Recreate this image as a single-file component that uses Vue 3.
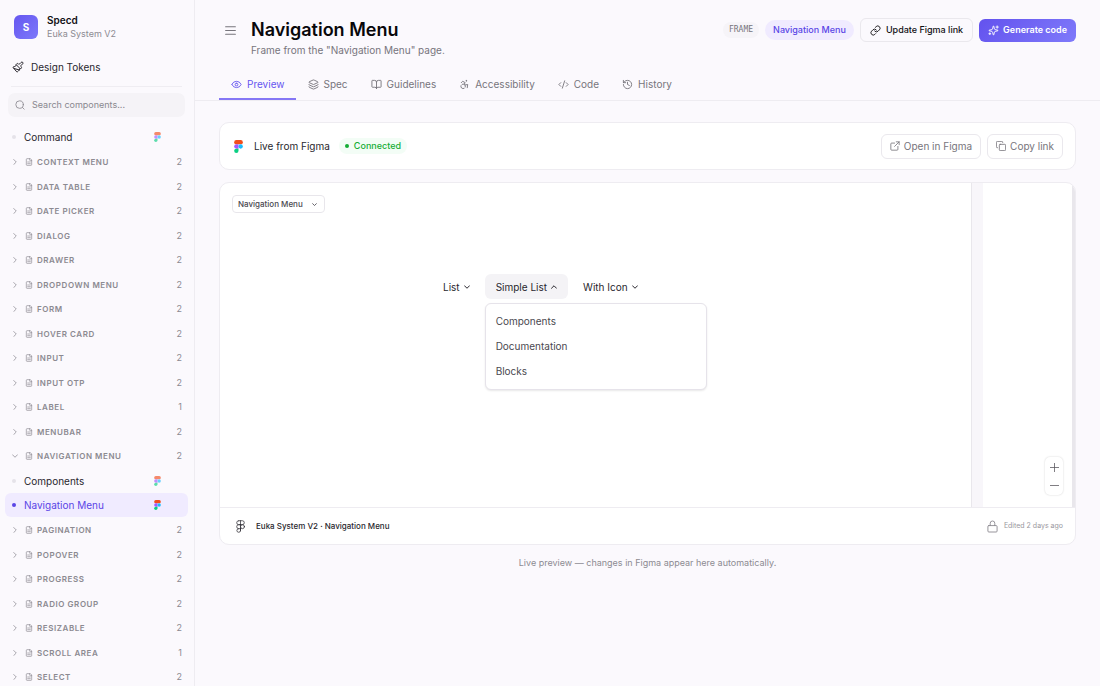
<script setup>
import { ref } from 'vue'

const query = ref('')
const frame = ref('Navigation Menu')
const activeTab = ref('Preview')

const before = [
  ['Context Menu', 2], ['Data Table', 2], ['Date Picker', 2], ['Dialog', 2],
  ['Drawer', 2], ['Dropdown Menu', 2], ['Form', 2], ['Hover Card', 2],
  ['Input', 2], ['Input OTP', 2], ['Label', 1], ['Menubar', 2],
  ['Navigation Menu', 2],
]
const after = [
  ['Pagination', 2], ['Popover', 2], ['Progress', 2], ['Radio Group', 2],
  ['Resizable', 2], ['Scroll Area', 1], ['Select', 2],
]
const toGroup = ([name, count]) => ({ name, count, open: name === 'Navigation Menu' })

const sections = [
  { items: [{ name: 'Command' }], groups: before.map(toGroup) },
  {
    items: [{ name: 'Components' }, { name: 'Navigation Menu', active: true }],
    groups: after.map(toGroup),
  },
]

const tabs = [
  { name: 'Preview', paths: ['M2.1 12.3a1 1 0 0 1 0-.7 10.8 10.8 0 0 1 19.8 0 1 1 0 0 1 0 .7 10.8 10.8 0 0 1-19.8 0', 'M12 9a3 3 0 1 0 0 6 3 3 0 0 0 0-6'] },
  { name: 'Spec', paths: ['M12.8 2.2a2 2 0 0 0-1.6 0L2.6 6.1a1 1 0 0 0 0 1.8l8.6 3.9a2 2 0 0 0 1.6 0l8.6-3.9a1 1 0 0 0 0-1.8z', 'M2 12a1 1 0 0 0 .6.9l8.6 3.9a2 2 0 0 0 1.6 0l8.6-3.9A1 1 0 0 0 22 12', 'M2 17a1 1 0 0 0 .6.9l8.6 3.9a2 2 0 0 0 1.6 0l8.6-3.9A1 1 0 0 0 22 17'] },
  { name: 'Guidelines', paths: ['M12 7v14', 'M3 18a1 1 0 0 1-1-1V4a1 1 0 0 1 1-1h5a4 4 0 0 1 4 4 4 4 0 0 1 4-4h5a1 1 0 0 1 1 1v13a1 1 0 0 1-1 1h-6a3 3 0 0 0-3 3 3 3 0 0 0-3-3z'] },
  { name: 'Accessibility', paths: ['M16 3a1 1 0 1 0 0 2 1 1 0 0 0 0-2', 'm18 19 1-7-6 1', 'm5 8 3-3 5.5 3-2.36 3.5', 'M4.24 14.5a5 5 0 0 0 6.88 6', 'M13.76 17.5a5 5 0 0 0-6.88-6'] },
  { name: 'Code', paths: ['m18 16 4-4-4-4', 'm6 8-4 4 4 4', 'm14.5 4-5 16'] },
  { name: 'History', paths: ['M3 12a9 9 0 1 0 9-9 9.75 9.75 0 0 0-6.74 2.74L3 8', 'M3 3v5h5', 'M12 7v5l4 2'] },
]
</script>

<template>
  <div class="app">
    <aside class="sidebar">
      <div class="brand">
        <span class="logo">S</span>
        <div>
          <div class="brand-name">Specd</div>
          <div class="brand-sub">Euka System V2</div>
        </div>
      </div>

      <a href="#tokens" class="tokens">
        <svg class="icon i12" viewBox="0 0 24 24">
          <path d="m14.622 17.897-10.68-2.913" />
          <path d="M18.376 2.622a1 1 0 1 1 3.002 3.002L17.36 9.643a.5.5 0 0 0 0 .707l.944.944a2.41 2.41 0 0 1 0 3.408l-.944.944a.5.5 0 0 1-.707 0L8.354 7.348a.5.5 0 0 1 0-.707l.944-.944a2.41 2.41 0 0 1 3.408 0l.944.944a.5.5 0 0 0 .707 0z" />
          <path d="M9 8c-1.804 2.71-3.97 3.46-6.583 3.948a.507.507 0 0 0-.302.819l7.32 8.883a1 1 0 0 0 1.185.204C12.735 20.405 16 16.792 16 15" />
        </svg>
        Design Tokens
      </a>

      <label class="search">
        <svg class="icon i10" viewBox="0 0 24 24"><circle cx="11" cy="11" r="9" /><path d="m22 22-4.3-4.3" /></svg>
        <input v-model="query" type="text" placeholder="Search components..." aria-label="Search components">
      </label>

      <nav class="tree">
        <template v-for="(section, i) in sections" :key="i">
          <div class="items">
            <a v-for="item in section.items" :key="item.name" href="#component" class="item" :class="{ active: item.active }">
              <span class="dot"></span>
              <span class="item-name">{{ item.name }}</span>
              <svg class="figma" viewBox="0 0 24 36">
                <path fill="#f24e1e" d="M6 0h12a6 6 0 0 1 0 12H6A6 6 0 0 1 6 0" />
                <path fill="#a259ff" d="M6 12h6v12H6a6 6 0 0 1 0-12" />
                <circle cx="18" cy="18" r="6" fill="#1abcfe" />
                <path fill="#0acf83" d="M6 24h6v6a6 6 0 1 1-6-6" />
              </svg>
            </a>
          </div>
          <div class="groups">
            <button v-for="group in section.groups" :key="group.name" type="button" class="group" :aria-expanded="group.open">
              <svg class="icon i6" viewBox="0 0 24 24"><path :d="group.open ? 'm2 7 10 10L22 7' : 'm7 2 10 10L7 22'" /></svg>
              <svg class="icon doc" viewBox="0 0 24 24">
                <path d="M15 2H6a2 2 0 0 0-2 2v16a2 2 0 0 0 2 2h12a2 2 0 0 0 2-2V7z" />
                <path d="M14 2v4a2 2 0 0 0 2 2h4M8 12h8M8 17h8" />
              </svg>
              <span class="group-name">{{ group.name }}</span>
              <span class="count">{{ group.count }}</span>
            </button>
          </div>
        </template>
      </nav>
    </aside>

    <main class="main">
      <header class="header">
        <div class="title-row">
          <button type="button" class="menu-toggle" aria-label="Toggle sidebar">
            <svg class="icon i13" viewBox="0 0 24 24"><path d="M3 5h18M3 12h18M3 19h18" /></svg>
          </button>
          <div class="titles">
            <h1>Navigation Menu</h1>
            <p>Frame from the "Navigation Menu" page.</p>
          </div>
          <div class="actions">
            <span class="kind">FRAME</span>
            <span class="page-tag">Navigation Menu</span>
            <button type="button" class="btn update">
              <svg class="icon i11" viewBox="0 0 24 24">
                <path d="M10 13a5 5 0 0 0 7.54.54l3-3a5 5 0 0 0-7.07-7.07l-1.72 1.71" />
                <path d="M14 11a5 5 0 0 0-7.54-.54l-3 3a5 5 0 0 0 7.07 7.07l1.71-1.71" />
              </svg>
              Update Figma link
            </button>
            <button type="button" class="btn generate">
              <svg class="icon i11" viewBox="0 0 24 24">
                <path d="M9.937 15.5A2 2 0 0 0 8.5 14.063l-6.135-1.582a.5.5 0 0 1 0-.962L8.5 9.936A2 2 0 0 0 9.937 8.5l1.582-6.135a.5.5 0 0 1 .963 0L14.063 8.5A2 2 0 0 0 15.5 9.937l6.135 1.581a.5.5 0 0 1 0 .964L15.5 14.063a2 2 0 0 0-1.437 1.437l-1.582 6.135a.5.5 0 0 1-.963 0z" />
                <path d="M20 2v5M22.500 4.500h-5M4 17v4M6 19H2" />
              </svg>
              Generate code
            </button>
          </div>
        </div>
        <div class="tabs" role="tablist">
          <button
            v-for="tab in tabs" :key="tab.name" type="button" role="tab" class="tab"
            :class="{ current: tab.name === activeTab }" :aria-selected="tab.name === activeTab"
            @click="activeTab = tab.name"
          >
            <svg class="icon i11" viewBox="0 0 24 24"><path v-for="d in tab.paths" :key="d" :d="d" /></svg>
            {{ tab.name }}
          </button>
        </div>
      </header>

      <div class="content">
        <section class="card live">
          <svg class="figma large" viewBox="0 0 24 36">
            <path fill="#f24e1e" d="M6 0h12a6 6 0 0 1 0 12H6A6 6 0 0 1 6 0" />
            <path fill="#a259ff" d="M6 12h6v12H6a6 6 0 0 1 0-12" />
            <circle cx="18" cy="18" r="6" fill="#1abcfe" />
            <path fill="#0acf83" d="M6 24h6v6a6 6 0 1 1-6-6" />
          </svg>
          <span class="live-name">Live from Figma</span>
          <span class="status">Connected</span>
          <div class="live-actions">
            <button type="button" class="btn quiet">
              <svg class="icon i10" viewBox="0 0 24 24">
                <path d="M15 2h7v7M11 13 22 2M19 13v7a2 2 0 0 1-2 2H4a2 2 0 0 1-2-2V7a2 2 0 0 1 2-2h7" />
              </svg>
              Open in Figma
            </button>
            <button type="button" class="btn quiet">
              <svg class="icon i10" viewBox="0 0 24 24">
                <rect x="8" y="8" width="15" height="15" rx="2" />
                <path d="M4 16a2 2 0 0 1-3-2V3a2 2 0 0 1 2-2h11a2 2 0 0 1 2 3" />
              </svg>
              Copy link
            </button>
          </div>
        </section>

        <section class="card preview">
          <div class="canvas">
            <div class="frame">
              <div class="picker">
                <select v-model="frame" aria-label="Frame">
                  <option>Navigation Menu</option>
                </select>
                <svg class="icon i5" viewBox="0 0 24 24"><path d="m3 8 9 9 9-9" /></svg>
              </div>
              <div class="navmenu">
                <button type="button">List <svg class="icon i6 bold" viewBox="0 0 24 24"><path d="m2 7 10 10L22 7" /></svg></button>
                <div class="open-menu">
                  <button type="button" class="opened" aria-expanded="true">Simple List <svg class="icon i6 bold" viewBox="0 0 24 24"><path d="m2 17 10-10 10 10" /></svg></button>
                  <div class="popup">
                    <a href="#components">Components</a>
                    <a href="#documentation">Documentation</a>
                    <a href="#blocks">Blocks</a>
                  </div>
                </div>
                <button type="button">With Icon <svg class="icon i6 bold" viewBox="0 0 24 24"><path d="m2 7 10 10L22 7" /></svg></button>
              </div>
            </div>
            <div class="gutter"></div>
            <div class="next-frame">
              <div class="zoomer">
                <button type="button" aria-label="Zoom in"><svg class="icon i9" viewBox="0 0 24 24"><path d="M1 12h22M12 1v22" /></svg></button>
                <button type="button" aria-label="Zoom out"><svg class="icon i9" viewBox="0 0 24 24"><path d="M1 12h22" /></svg></button>
              </div>
            </div>
            <div class="edge"></div>
          </div>
          <footer class="file">
            <svg class="icon outline-figma" viewBox="0 0 24 36">
              <path d="M7 2h10a5 5 0 0 1 0 11H7A5 5 0 0 1 7 2M12 2v28M12 13H7a5 5 0 0 0 0 11h5M7 24a5 5 0 1 0 5 5v-5" />
              <circle cx="17.500" cy="18.500" r="5.500" />
            </svg>
            <span>Euka System V2 · Navigation Menu</span>
            <svg class="icon lock" viewBox="0 0 24 28"><rect x="2" y="12" width="20" height="14" rx="2" /><path d="M7 12V7a5 5 0 0 1 10 0v5" /></svg>
            <small>Edited 2 days ago</small>
          </footer>
        </section>
        <p class="note">Live preview — changes in Figma appear here automatically.</p>
      </div>
    </main>
  </div>
</template>

<style>
body {
  background: #fbf9fd;
}
</style>

<style scoped>
.app {
  display: flex;
  min-height: 100vh;
  font: 10px/16px Inter, "Liberation Sans", sans-serif;
  color: #29272e;
}
.app * { box-sizing: border-box; }
button, input, select { font: inherit; color: inherit; margin: 0; padding: 0; border: 0; background: none; }
a { color: inherit; text-decoration: none; }
.icon { flex: none; fill: none; stroke: currentColor; stroke-width: 2; stroke-linecap: round; stroke-linejoin: round; }
.i5 { width: 5px; height: 5px; stroke-width: 4; }
.i6 { width: 6px; height: 6px; stroke-width: 3; }
.bold { stroke-width: 4; }
.i9 { width: 9px; height: 9px; }
.i10 { width: 10px; height: 10px; }
.i11 { width: 11px; height: 11px; }
.i12 { width: 12px; height: 12px; }
.i13 { width: 13px; height: 13px; }

.sidebar {
  flex: none;
  width: 195px;
  height: 100vh;
  position: sticky;
  top: 0;
  overflow: hidden;
  border-right: 1px solid #eeecf1;
}
.brand { display: flex; align-items: center; gap: 9px; padding: 13px 14px 0; height: 41px; }
.logo {
  width: 24px; height: 24px; border-radius: 6px; color: #fff; font-weight: 700;
  display: grid; place-items: center; background: linear-gradient(135deg, #6657f0, #7c78fa);
}
.brand-name { font-weight: 600; line-height: 14px; color: #111014; }
.brand-sub { color: #8d8b92; line-height: 14px; font-size: 9px; }
.tokens { display: flex; align-items: center; gap: 7px; margin: 13px 12px 0 11px; padding: 5px 0 11px 1px; border-bottom: 1px solid #efedf2; }
.search {
  display: flex; align-items: center; gap: 7px; margin: 6px 9px 0 8px; height: 24px; padding: 0 7px;
  border-radius: 7px; background: #f5f3f7; color: #8a888f; font-size: 9px;
}
.search input { flex: 1; min-width: 0; outline: none; }
.search input::placeholder { color: #8a888f; opacity: 1; }

.tree { padding: 8px 6px 0 5px; }
.item { display: flex; align-items: center; height: 24px; border-radius: 6px; padding: 0 27px 0 7px; }
.dot { width: 4px; height: 4px; border-radius: 2px; background: #e5e3e9; }
.item-name { flex: 1; margin-left: 8px; }
.figma { flex: none; width: 7px; height: 10px; opacity: .65; }
.item.active { background: #f0ebff; color: #5a45e6; }
.active .dot { background: #5a45e6; }
.active .figma { opacity: 1; }
.groups { padding-top: 1px; }
.group {
  display: flex; align-items: center; width: 100%; height: 24px; padding: 0 6px 0 7px;
  color: #8c8a91; font-size: 8px; font-weight: 600; letter-spacing: .07em; text-transform: uppercase;
}
.group:nth-child(odd) { margin-bottom: 1px; }
.doc { width: 8px; height: 8px; margin: 0 4px 0 7px; }
.count { margin-left: auto; font-size: 9px; font-weight: 400; letter-spacing: 0; }

.main { flex: 1; min-width: 0; }
.header { padding: 18px 24px 0; border-bottom: 1px solid #eeecf1; }
.title-row { display: flex; align-items: flex-start; }
.menu-toggle { height: 24px; margin: 0 14px 0 5px; display: flex; align-items: center; color: #77757c; }
h1 { margin: 0; font-size: 18px; line-height: 24px; font-weight: 600; color: #08070a; }
.titles p { margin: 0; color: #77757c; }
.actions { margin-left: auto; display: flex; align-items: center; gap: 6px; height: 24px; }
.kind { font: 8px/16px "DejaVu Sans Mono", monospace; padding: 0 6px; border-radius: 8px; background: #f6f4f8; color: #77757c; }
.page-tag { padding: 2px 8px; border-radius: 10px; background: #f0ebff; color: #5a45e6; font-weight: 500; font-size: 9px; }
.btn { display: flex; align-items: center; gap: 4px; height: 24px; padding: 0 9px; border-radius: 6px; }
.update { gap: 5px; border: 1px solid #eae8ed; font-size: 9px; font-weight: 500; color: #111014; }
.generate { height: 23px; color: #fff; font-size: 9px; font-weight: 600; background: linear-gradient(135deg, #6352ee, #7f7afa); }
.tabs { display: flex; margin-top: 12px; }
.tab { display: flex; align-items: center; gap: 5px; height: 30px; padding: 0 11px 0 12px; border-bottom: 2px solid transparent; color: #77757c; }
.tab.current { color: #6655f0; border-color: #8577f5; }

.content { padding: 21px 24px; }
.card { background: #fff; border: 1px solid #eeecf1; border-radius: 10px; }
.live { display: flex; align-items: center; height: 48px; padding: 0 12px 0 14px; }
.large { width: 9px; height: 13px; opacity: 1; }
.live-name { margin-left: 11px; }
.status { display: flex; align-items: center; gap: 5px; margin-left: 9px; padding: 0 6px; border-radius: 8px; background: #f3fdf6; color: #15ad35; font-size: 9px; font-weight: 500; }
.status::before { content: ""; width: 4px; height: 4px; border-radius: 2px; background: currentColor; }
.live-actions { margin-left: auto; display: flex; gap: 6px; }
.quiet { height: 25px; padding: 0 8px; border: 1px solid #eae8ed; color: #77757c; }

.preview { margin-top: 12px; overflow: hidden; }
.canvas { display: flex; height: 324px; }
.frame { flex: 1; min-width: 0; padding: 12px; }
.picker { position: relative; width: 93px; color: #4a484f; }
.picker select {
  display: block; appearance: none; width: 100%; height: 18px; padding: 0 14px 0 5px;
  border: 1px solid #e8e6eb; border-radius: 4px; font-size: 8px; font-weight: 500; background: #fff;
}
.picker .icon { position: absolute; right: 8px; top: 7px; pointer-events: none; }
.navmenu { display: flex; gap: 4px; margin: 61px 0 0 200px; color: #29272e; }
.navmenu button { display: flex; align-items: center; gap: 4px; height: 25px; padding: 0 11px; border-radius: 6px; }
.navmenu .opened { background: #f4f3f6; }
.open-menu { position: relative; }
.popup {
  position: absolute; top: 29px; left: 0; width: 222px; padding: 5px; background: #fff;
  border: 1px solid #e6e3ea; border-radius: 6px; box-shadow: 0 1px 2px #00000018;
}
.popup a { display: block; padding: 0 5px; line-height: 25px; color: #4a484f; }
.gutter { width: 12px; background: #f8f6fa; border-left: 1px solid #e9e7ec; }
.next-frame { width: 89px; display: flex; align-items: flex-end; justify-content: flex-end; padding: 0 9px 12px; }
.zoomer { width: 18px; padding: 1px 0; border-radius: 5px; box-shadow: 0 0 2px #00000030; color: #55535a; }
.zoomer button { display: grid; place-items: center; width: 100%; height: 18px; }
.edge { width: 3px; background: #e9e7ec; }
.file { display: flex; align-items: center; height: 37px; padding: 0 12px 0 16px; border-top: 1px solid #eeecf1; font-size: 8px; font-weight: 500; }
.outline-figma { width: 9px; height: 13px; margin-right: 11px; }
.lock { width: 11px; height: 13px; margin: 0 6px 0 auto; color: #8d8b92; }
small { font-size: 7px; font-weight: 400; color: #99979e; }
.note { margin: 10px 0 0; text-align: center; color: #8d8b92; font-size: 9px; }
</style>
